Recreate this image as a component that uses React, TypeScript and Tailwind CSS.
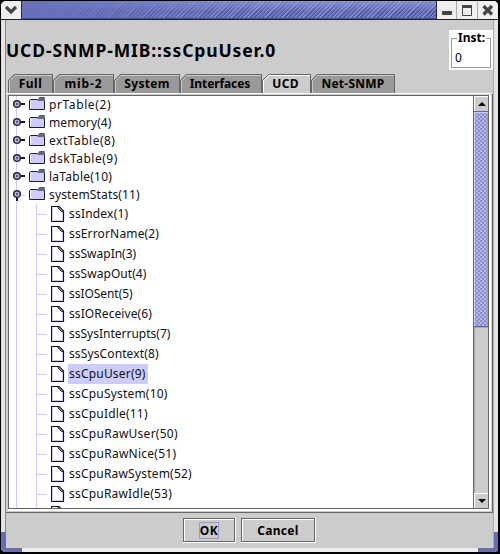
import React from "react";

const folders = [
  { name: "prTable(2)", cls: "tracking-[0.6px]" },
  { name: "memory(4)", cls: "tracking-[0.1px]" },
  { name: "extTable(8)", cls: "tracking-[0.5px]" },
  { name: "dskTable(9)", cls: "tracking-[0.5px]" },
  { name: "laTable(10)", cls: "tracking-[0.25px]" },
  { name: "systemStats(11)", cls: "tracking-[0.15px]", open: true },
];

const leaves = [
  { name: "ssIndex(1)", cls: "tracking-[0.2px]" },
  { name: "ssErrorName(2)", cls: "tracking-[0.15px]" },
  { name: "ssSwapIn(3)", cls: "tracking-[0px]" },
  { name: "ssSwapOut(4)", cls: "tracking-[0.05px]" },
  { name: "ssIOSent(5)", cls: "tracking-[-0.05px]" },
  { name: "ssIOReceive(6)", cls: "tracking-[0.08px]" },
  { name: "ssSysInterrupts(7)", cls: "tracking-[0px]" },
  { name: "ssSysContext(8)", cls: "tracking-[0.12px]" },
  { name: "ssCpuUser(9)", cls: "tracking-[0.2px]", selected: true },
  { name: "ssCpuSystem(10)", cls: "tracking-[0.2px]" },
  { name: "ssCpuIdle(11)", cls: "tracking-[0.2px]" },
  { name: "ssCpuRawUser(50)", cls: "tracking-[0.26px]" },
  { name: "ssCpuRawNice(51)", cls: "tracking-[0.26px]" },
  { name: "ssCpuRawSystem(52)", cls: "tracking-[0.2px]" },
  { name: "ssCpuRawIdle(53)", cls: "tracking-[0.2px]" },
  { name: "", cls: "" },
];

const tabs = [
  { name: "Full", w: "w-[45px]", cls: "tracking-[0.5px]" },
  { name: "mib-2", w: "w-[61px]", cls: "tracking-[0.9px]" },
  { name: "System", w: "w-[66px]", cls: "tracking-[0.3px]" },
  { name: "Interfaces", w: "w-[82px]", cls: "tracking-[-0.1px] pr-[2px]" },
  { name: "UCD", w: "w-[49px]", cls: "tracking-[0.3px] pr-[2px]", active: true },
  { name: "Net-SNMP", w: "w-[84px]", cls: "tracking-[0.25px]" },
];

function Handle({ open }: { open?: boolean }) {
  return (
    <svg className="block h-[18px] w-[20px] shrink-0" viewBox="0 0 20 18">
      <path d="M7.5 0V18" stroke="#ccccff" />
      {open ? (
        <>
          <path d="M11 9.5H16" stroke="#ccccff" />
          <path d="M8 11V15" stroke="#111122" strokeWidth="2" />
        </>
      ) : (
        <path d="M11 8H16" stroke="#111122" strokeWidth="2" />
      )}
      <circle cx="8" cy="8" r="3.3" fill="#b8b8dc" stroke="#29293f" strokeWidth="1.5" />
      <circle cx="8" cy="8" r="1.2" fill="#555577" />
    </svg>
  );
}

function Folder() {
  return (
    <svg className="block h-[18px] w-[17px] shrink-0" viewBox="0 0 17 18">
      <path d="M0.5 13.5V4.5L1.5 3.5H8L9.5 4.5H15.5V13.5Z" fill="#ccccff" stroke="#1c1c2e" />
      <path d="M9 4L10.5 1.5H15.5L16 2V5H9Z" fill="#666688" />
      <path d="M9.5 3.5L10.5 1.5H15.5" fill="none" stroke="#55556b" />
      <path d="M1.5 12.5V5" stroke="#fff" />
    </svg>
  );
}

function Leaf() {
  return (
    <svg className="block h-5 w-[14px] shrink-0" viewBox="0 0 14 20">
      <path d="M0.5 2.5H8L12.5 7V17.5H0.5Z" fill="#fff" stroke="#10101c" strokeWidth="1.2" />
      <path d="M1.5 16.5V3.5" stroke="#ccccff" />
      <path d="M1.5 16.5H11.5V8" fill="none" stroke="#ccccff" />
      <path d="M7 2.5V4L10.5 7.5H12.5V7L8 2.5Z" fill="#8888a8" stroke="#10101c" strokeWidth=".8" />
    </svg>
  );
}

function Tab({ t }: { t: (typeof tabs)[number] }) {
  const w = parseInt(t.w.slice(3), 10);
  const fill = t.active ? "#cccccc" : "#999999";
  return (
    <div className={`relative h-[19px] ${t.w}`}>
      <svg className="absolute inset-0 h-[19px] w-full" viewBox={`0 0 ${w} 19`} preserveAspectRatio="none">
        <path d={`M0 19V6L6 0H${w}V19Z`} fill={fill} />
        <path d={`M0.5 19V6.5L6.5 0.5H${w}`} fill="none" stroke="#666" />
        <path d={`M1.5 19V7L7 1.5H${w - 1}`} fill="none" stroke={t.active ? "#fff" : "#ccc"} />
        <path d={`M${w - 0.5} 0V19`} stroke="#666" />
      </svg>
      <div className={`relative text-center text-[12px] leading-[19px] font-bold ${t.cls}`}>{t.name}</div>
    </div>
  );
}

function ScrollButton({ down }: { down?: boolean }) {
  return (
    <div className="flex h-[15px] shrink-0 items-center justify-center border-t border-l border-white bg-[#ccc]">
      <svg className="h-[4px] w-[8px]" viewBox="0 0 8 4">
        <path d={down ? "M0 0H8L4 4Z" : "M0 4H8L4 0Z"} fill="#000" />
      </svg>
    </div>
  );
}

function PushButton({ label, w, cls, focused }: { label: string; w: string; cls: string; focused?: boolean }) {
  return (
    <div className={`h-[25px] border-r border-b border-white ${w}`}>
      <div className="flex h-[24px] items-center justify-center border border-[#666] shadow-[inset_1px_1px_0_#fff]">
        <span className={`text-[12px] leading-[15px] font-bold ${cls} ${focused ? "outline outline-[#9999cc]" : ""}`}>
          {label}
        </span>
      </div>
    </div>
  );
}

export default function App() {
  return (
    <div className="h-[554px] w-[500px] bg-black font-['Noto_Sans','DejaVu_Sans',sans-serif]">
      <div className="flex h-[554px] w-[500px] flex-col overflow-hidden rounded-[6px] border-t border-r-2 border-b-2 border-l border-black bg-[#ccc] text-black">
        <div className="flex h-[19px] shrink-0 border-b border-[#222]">
          <div className="flex w-[20px] items-center justify-center bg-[#eee]">
            <svg className="h-[10px] w-[12px]" viewBox="0 0 12 10">
              <path d="M1 2L6 7L11 2" fill="none" stroke="#444" strokeWidth="3.2" />
            </svg>
          </div>
          <div className="h-full flex-1 border-x border-[#222255] bg-[linear-gradient(90deg,#6870bc,#6870bc00_60%),linear-gradient(180deg,#9aa2e8aa,#7078c000_60%),repeating-linear-gradient(135deg,#848ccc_0_1px,#656cb4_1px_2px,#50579a_2px_3px)] shadow-[inset_0_-1px_0_#444c8c]" />
          <div className="flex w-[20px] items-center justify-center border-r border-[#aaa] bg-[#eee]">
            <svg className="h-[14px] w-[14px]" viewBox="0 0 14 14">
              <rect x="2" y="8" width="10" height="4" rx="1" fill="#444" />
            </svg>
          </div>
          <div className="flex w-[21px] items-center justify-center border-r border-[#aaa] bg-[#eee]">
            <svg className="h-[14px] w-[14px]" viewBox="0 0 14 14">
              <path d="M2.5 2V12.5H11.5V2" fill="#eee" stroke="#444" />
              <rect x="2" y="2" width="10" height="3" fill="#444" />
            </svg>
          </div>
          <div className="flex w-[20px] items-center justify-center bg-[#eee]">
            <svg className="h-[14px] w-[14px]" viewBox="0 0 14 14">
              <path d="M2.5 3L11 11.5M11 3L2.5 11.5" stroke="#444" strokeWidth="3.2" />
            </svg>
          </div>
        </div>

        <div className="flex h-[528px] shrink-0">
          <div className="flex w-[5px] flex-col border-r border-[#888] bg-[#e4e4e4]">
            <div className="mt-auto h-[16px] w-[5px] bg-[#666cb4]" />
          </div>
          <div className="flex w-[487px] flex-col">
            <div className="flex h-[54px] shrink-0">
              <h1 className="mt-[16px] w-[443px] text-[17.5px] leading-[28px] font-bold tracking-[0.88px] whitespace-nowrap">UCD-SNMP-MIB::ssCpuUser.0</h1>
              <div className="mt-[10px] h-[40px] w-[44px] bg-white px-[2px] pt-[8px]">
                <div className="h-[30px] border border-[#999] pl-[3px]">
                  <div className="-mt-[9px] ml-[2px] w-[29px] bg-white pl-px text-[12px] leading-[16px] font-bold">Inst:</div>
                  <div className="mt-[3px] text-[12px] leading-[18px]">0</div>
                </div>
              </div>
            </div>
            <div className="flex h-[19px] shrink-0 pl-[2px]">
              {tabs.map((t) => (
                <Tab key={t.name} t={t} />
              ))}
            </div>
            <div className="flex h-[420px] shrink-0 border-t border-r border-b border-t-white border-r-[#666] border-b-[#666] pt-px pr-px pl-[2px]">
              <div className="flex h-[416px] w-full border-r-2 border-b-2 border-white">
                <div className="flex w-full border border-[#666] bg-white">
                  <div className="flex-1 overflow-hidden text-[#111]">
                    {folders.map((f) => (
                      <div key={f.name} className="flex h-[18px]">
                        <Handle open={f.open} />
                        <Folder />
                        <span className={`ml-[3px] text-[12px] leading-[18px] ${f.cls}`}>{f.name}</span>
                      </div>
                    ))}
                    {leaves.map((l) => (
                      <div key={l.name} className="flex h-[20px]">
                        <div className="ml-[7px] w-[20px] border-l border-[#ccccff]" />
                        <div className="flex w-[15px] items-center border-l border-[#ccccff]">
                          <div className="h-px w-[10px] bg-[#ccccff]" />
                        </div>
                        <Leaf />
                        <span className={`ml-[3px] pr-[2px] pl-px text-[12px] leading-[20px] ${l.cls} ${l.selected ? "bg-[#ccccff]" : ""}`}>
                          {l.name}
                        </span>
                      </div>
                    ))}
                  </div>
                  <div className="flex w-[15px] flex-col border-l border-[#666] bg-[#ccc]">
                    <ScrollButton />
                    <div className="h-[216px] border-y border-[#666699] bg-[#8c8ccb] bg-[radial-gradient(circle_at_1px_1px,#b4b4e6_0.8px,transparent_1px),radial-gradient(circle_at_3px_3px,#b4b4e6_0.8px,transparent_1px)] bg-[size:4px_4px] shadow-[inset_1px_1px_0_#ccccff,inset_-1px_0_0_#9999cc]" />
                    <div className="flex-1 shadow-[inset_1px_1px_0_#aaa]" />
                    <ScrollButton down />
                  </div>
                </div>
              </div>
            </div>
            <div className="flex h-[35px] justify-center gap-[5px] pt-[5px]">
              <PushButton label="OK" w="w-[53px]" cls="tracking-[0.6px]" focused />
              <PushButton label="Cancel" w="w-[75px]" cls="tracking-[0.3px]" />
            </div>
          </div>
          <div className="flex w-[5px] flex-col border-l border-[#aaa] bg-[#e4e4e4]">
            <div className="mt-auto h-[16px] bg-[#666cb4]" />
          </div>
        </div>
        <div className="flex h-[4px] shrink-0 justify-between bg-[#eee]">
          <div className="w-[21px] bg-[#666cb4]" />
          <div className="w-[20px] bg-[#666cb4]" />
        </div>
      </div>
    </div>
  );
}
